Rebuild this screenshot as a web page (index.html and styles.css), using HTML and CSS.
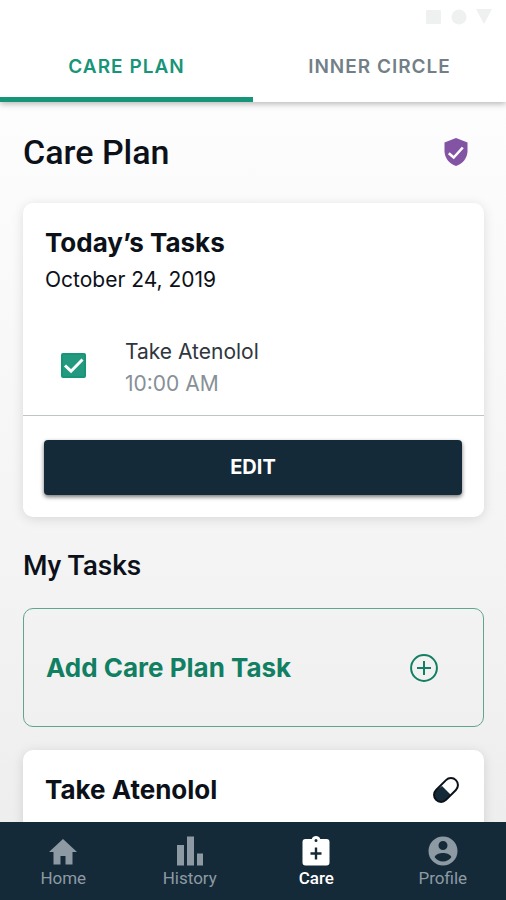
FILE: index.html
```html
<!DOCTYPE html>
<html lang="en">
<head>
<meta charset="utf-8">
<meta name="viewport" content="width=device-width, initial-scale=1">
<title>Care Plan</title>
<link rel="stylesheet" href="styles.css">
</head>
<body>
<div class="app">
  <header class="top">
    <div class="status" aria-hidden="true">
      <svg width="68" height="16" viewBox="0 0 68 16"><rect x="1" y="1" width="15" height="14" rx="1"/><circle cx="34" cy="8" r="7.500"/><path d="M51 0h16l-8 15z"/></svg>
    </div>
    <nav class="tabs" aria-label="Sections">
      <a class="tab tab-active" href="#care" aria-current="page">CARE PLAN</a>
      <a class="tab" href="#circle">INNER CIRCLE</a>
    </nav>
  </header>

  <main class="content">
    <div class="title-row">
      <h1>Care Plan</h1>
      <svg class="shield" viewBox="0 0 24 28" aria-hidden="true"><path fill="#8353a4" d="M12 0 23.500 4.500V13C23.500 20 18.500 26 12 28 5.500 26 .5 20 .5 13V4.500z"/><path d="m4.800 15.200 4.900 4.300L18.800 9.500" fill="none" stroke="#fff" stroke-width="2.600"/></svg>
    </div>

    <section class="card">
      <h2 class="card-title">Today’s Tasks</h2>
      <p class="date">October 24, 2019</p>
      <div class="task">
        <span class="check">
          <input type="checkbox" id="task-1" checked>
          <svg viewBox="0 0 25 25" aria-hidden="true"><path d="m4 12.500 6 5.700L21.500 6.500"/></svg>
        </span>
        <label for="task-1"><span class="task-name">Take Atenolol</span><span class="task-time">10:00 AM</span></label>
      </div>
      <div class="actions"><button class="edit" type="button">EDIT</button></div>
    </section>

    <h2 class="section-title">My Tasks</h2>
    <button class="add" type="button">
      <span>Add Care Plan Task</span>
      <svg viewBox="0 0 28 28" aria-hidden="true"><circle cx="14" cy="14" r="12.900"/><path d="M14 7v14M7 14h14"/></svg>
    </button>

    <section class="card card-row">
      <h2 class="card-title">Take Atenolol</h2>
      <svg class="pill" viewBox="0 0 28 28" aria-hidden="true"><clipPath id="capsule"><rect x="0" y="7" width="28" height="14" rx="7" transform="rotate(-45 14 14)"/></clipPath><path d="M0 17.500 10 10l9 9v9H0z" fill="#152a38" clip-path="url(#capsule)"/><rect x="0" y="7" width="28" height="14" rx="7" transform="rotate(-45 14 14)" fill="none" stroke="#0c1119" stroke-width="2"/></svg>
    </section>
  </main>

  <nav class="bottom" aria-label="Main">
    <a class="item" href="#home"><svg viewBox="0 0 30 30" aria-hidden="true"><path d="M15 3 1 16h4.500v12.500h7V20h5v8.500h7V16H29z"/></svg>Home</a>
    <a class="item" href="#history"><svg viewBox="0 0 30 30" aria-hidden="true"><path d="M2 9h7v20.500H2zM12 .5h7v29h-7zM22 17.500h6v12h-6z"/></svg>History</a>
    <a class="item item-active" href="#care" aria-current="page"><svg viewBox="0 0 30 30" aria-hidden="true"><path fill-rule="evenodd" d="M4.500 3h6.300a4.500 4.500 0 0 1 8.400 0h6.300a3 3 0 0 1 3 3v20.500a3 3 0 0 1-3 3h-21a3 3 0 0 1-3-3V6a3 3 0 0 1 3-3zM15 3a1.500 1.500 0 1 0 0 3 1.500 1.500 0 0 0 0-3zM13.800 11.500v4.800H9.500v2.400h4.300v4.800h2.400v-4.800h4.300v-2.400h-4.300v-4.800z"/></svg>Care</a>
    <a class="item" href="#profile"><svg viewBox="0 0 30 30" aria-hidden="true"><path fill-rule="evenodd" d="M15 .5a14.500 14.500 0 1 0 0 29 14.500 14.500 0 0 0 0-29zM15 5a4.500 4.500 0 1 1 0 9 4.500 4.500 0 0 1 0-9zM15 25.500c-3.600 0-6.500-1.700-8.300-4.300 0-2.700 5.500-4.200 8.300-4.200s8.300 1.500 8.300 4.200C21.500 23.800 18.600 25.500 15 25.500z"/></svg>Profile</a>
  </nav>
</div>
</body>
</html>
```
FILE: styles.css
```css
* {
  box-sizing: border-box;
}

body,
h1,
h2,
p {
  margin: 0;
}

body {
  font-family: Inter, "Liberation Sans", sans-serif;
  color: #0c1119;
}

a {
  text-decoration: none;
}

button {
  font: inherit;
  cursor: pointer;
}

.app {
  display: flex;
  flex-direction: column;
  height: 100vh;
}

.top {
  position: relative;
  background: #fff;
  box-shadow: 0 2px 6px rgba(0, 0, 0, 0.28);
}

.status {
  display: flex;
  justify-content: flex-end;
  padding: 9px 13px;
  fill: #eff1f1;
}

.tabs {
  display: grid;
  grid-template-columns: 1fr 1fr;
}

.tab {
  padding: 21px 0 18px;
  border-bottom: 5px solid transparent;
  font-size: 19px;
  font-weight: 600;
  line-height: 24px;
  letter-spacing: 1px;
  text-align: center;
  color: #737f87;
}

.tab-active {
  border-color: #179579;
  color: #179579;
}

.content {
  flex: 1;
  min-height: 0;
  overflow: auto;
  scrollbar-width: none;
  padding: 30px 22px 24px 23px;
  background: linear-gradient(#fdfdfd, #f5f5f5 55%, #eee);
}

.title-row {
  display: flex;
  align-items: center;
  justify-content: space-between;
  padding-right: 16px;
  margin-bottom: 31px;
}

h1 {
  font-family: Roboto, sans-serif;
  font-size: 34px;
  font-weight: 500;
  line-height: 40px;
}

.shield {
  width: 24px;
  height: 28px;
}

.card {
  padding-top: 20px;
  border-radius: 10px;
  background: #fff;
  box-shadow: 0 2px 12px rgba(0, 0, 0, 0.12);
}

.card-title {
  padding: 0 22px;
  font-size: 26px;
  font-weight: 700;
  line-height: 40px;
}

.date {
  padding: 0 22px;
  font-size: 21px;
  line-height: 34px;
}

.task {
  display: flex;
  align-items: flex-start;
  gap: 39px;
  margin-top: 39px;
  padding: 0 38px 15px;
  border-bottom: 1px solid #bfc5c5;
  font-size: 21px;
  line-height: 32px;
}

.check {
  display: grid;
  padding-top: 17px;
}

.check input,
.check svg {
  grid-area: 1 / 1;
  width: 25px;
  height: 25px;
  margin: 0;
}

.check input {
  appearance: none;
  border: 2px solid #179579;
  border-radius: 2px;
}

.check input:checked {
  background: #239a7f;
}

.check svg {
  pointer-events: none;
  fill: none;
  stroke: #fff;
  stroke-width: 3;
}

.task-name,
.task-time {
  display: block;
}

.task-name {
  color: #30363d;
}

.task-time {
  color: #879096;
}

.actions {
  padding: 24px 22px 22px 21px;
}

.edit {
  display: block;
  width: 100%;
  padding: 15px;
  border: 0;
  border-radius: 4px;
  background: #152a38;
  box-shadow: 0 2px 4px rgba(0, 0, 0, 0.55);
  font-size: 20px;
  font-weight: 700;
  line-height: 25px;
  color: #fff;
}

.section-title {
  margin: 29px 0 22px;
  font-family: Roboto, sans-serif;
  font-size: 28px;
  font-weight: 500;
  line-height: 40px;
}

.add {
  display: flex;
  align-items: center;
  justify-content: space-between;
  width: 100%;
  margin-bottom: 23px;
  padding: 39px 45px 39px 22px;
  border: 1px solid #5fa58f;
  border-radius: 10px;
  background: transparent;
  font-size: 26px;
  font-weight: 700;
  line-height: 39px;
  color: #117f62;
}

.add svg {
  width: 28px;
  height: 28px;
  fill: none;
  stroke: #117f62;
  stroke-width: 2;
}

.card-row {
  display: flex;
  align-items: center;
  justify-content: space-between;
  padding: 20px 24px 20px 0;
}

.pill {
  width: 28px;
  height: 28px;
}

.bottom {
  position: relative;
  display: grid;
  grid-template-columns: repeat(4, 1fr);
  padding: 14px 0 11px;
  background: #152a38;
}

.item {
  display: flex;
  flex-direction: column;
  align-items: center;
  gap: 1px;
  font-family: Roboto, sans-serif;
  font-size: 17px;
  line-height: 22px;
  color: #8d9aa4;
}

.item svg {
  width: 30px;
  height: 30px;
  fill: currentColor;
}

.item-active {
  font-weight: 500;
  color: #fff;
}
```
